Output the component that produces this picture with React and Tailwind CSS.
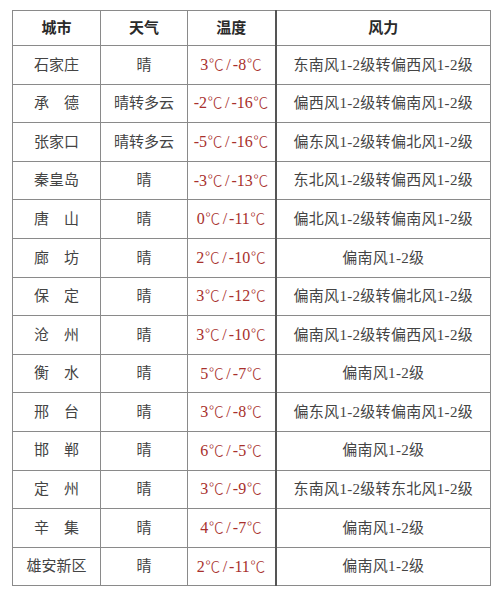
import React from "react";

const rows = [
  ["石家庄", "晴", "3℃/-8℃", "东南风1-2级转偏西风1-2级"],
  ["承德", "晴转多云", "-2℃/-16℃", "偏西风1-2级转偏南风1-2级"],
  ["张家口", "晴转多云", "-5℃/-16℃", "偏东风1-2级转偏北风1-2级"],
  ["秦皇岛", "晴", "-3℃/-13℃", "东北风1-2级转偏西风1-2级"],
  ["唐山", "晴", "0℃/-11℃", "偏北风1-2级转偏南风1-2级"],
  ["廊坊", "晴", "2℃/-10℃", "偏南风1-2级"],
  ["保定", "晴", "3℃/-12℃", "偏南风1-2级转偏北风1-2级"],
  ["沧州", "晴", "3℃/-10℃", "偏南风1-2级转偏西风1-2级"],
  ["衡水", "晴", "5℃/-7℃", "偏南风1-2级"],
  ["邢台", "晴", "3℃/-8℃", "偏东风1-2级转偏南风1-2级"],
  ["邯郸", "晴", "6℃/-5℃", "偏南风1-2级"],
  ["定州", "晴", "3℃/-9℃", "东南风1-2级转东北风1-2级"],
  ["辛集", "晴", "4℃/-7℃", "偏南风1-2级"],
  ["雄安新区", "晴", "2℃/-11℃", "偏南风1-2级"],
];

function City({ name }) {
  if (name.length === 2) {
    return (
      <span className="inline-flex gap-[15px]">
        <span>{name[0]}</span>
        <span>{name[1]}</span>
      </span>
    );
  }
  return <span>{name}</span>;
}

function Deg() {
  return (
    <span
      className="inline-block w-[16px] text-center text-[15px] font-light [font-feature-settings:'fwid']"
      style={{ fontFamily: '"Noto Sans CJK SC", sans-serif' }}
    >
      ℃
    </span>
  );
}

function Temp({ t }) {
  const [hi, lo] = t.split("/");
  const deg = (s) => s.replace("℃", "");
  return (
    <span className="inline-flex items-baseline">
      <span>{deg(hi)}</span>
      <Deg />
      <span className="px-[2px]">/</span>
      <span>{deg(lo)}</span>
      <Deg />
    </span>
  );
}

export default function App() {
  return (
    <div
      className="w-[500px] h-[610px] bg-white pt-[10px] pl-[12px]"
      style={{ fontFamily: '"Liberation Serif", "Noto Sans CJK SC", serif' }}
    >
      <table className="border-collapse text-[15px] text-[#444] table-fixed w-[478px]">
        <colgroup>
          <col className="w-[88px]" />
          <col className="w-[87px]" />
          <col className="w-[88px]" />
          <col className="w-[215px]" />
        </colgroup>
        <thead>
          <tr className="h-[35px]">
            <th className="border border-[#8a8a8a] font-bold text-[#2a2a2a] text-center">城市</th>
            <th className="border border-[#8a8a8a] font-bold text-[#2a2a2a] text-center">天气</th>
            <th className="border border-[#8a8a8a] font-bold text-[#2a2a2a] text-center">温度</th>
            <th className="border border-[#8a8a8a] border-l-2 border-l-[#555] font-bold text-[#2a2a2a] text-center">风力</th>
          </tr>
        </thead>
        <tbody>
          {rows.map((r, i) => (
            <tr key={i} className="h-[38.6px]">
              <td className="border border-[#8a8a8a] text-center p-0">
                <City name={r[0]} />
              </td>
              <td className="border border-[#8a8a8a] text-center p-0">{r[1]}</td>
              <td className="border border-[#8a8a8a] text-center p-0 text-[16px] text-[#a8302c]">
                <Temp t={r[2]} />
              </td>
              <td className="border border-[#8a8a8a] border-l-2 border-l-[#555] text-center p-0 text-[15px] tracking-[0.3px]">{r[3]}</td>
            </tr>
          ))}
        </tbody>
      </table>
    </div>
  );
}
